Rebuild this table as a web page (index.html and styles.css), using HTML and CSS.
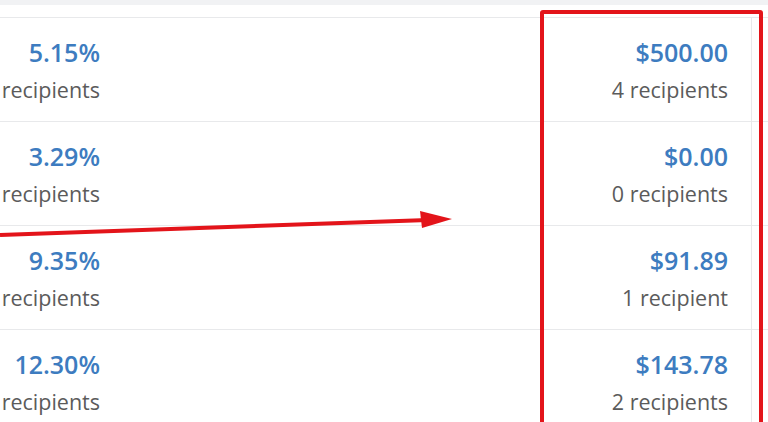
FILE: index.html
```html
<!DOCTYPE html>
<html lang="en">
<head>
    <meta charset="UTF-8">
    <title>Campaign recipients</title>
    <link rel="stylesheet" href="styles.css">
</head>
<body>
<div class="page">
    <div class="top-strip"></div>
    <div class="table">
        <div class="table-head"></div>
        <div class="row">
            <div class="cell cell-rate">
                <div class="value">5.15%</div>
                <div class="sub">21 recipients</div>
            </div>
            <div class="cell cell-gap"></div>
            <div class="cell cell-amount">
                <div class="value">$500.00</div>
                <div class="sub">4 recipients</div>
            </div>
        </div>
        <div class="row">
            <div class="cell cell-rate">
                <div class="value">3.29%</div>
                <div class="sub">14 recipients</div>
            </div>
            <div class="cell cell-gap"></div>
            <div class="cell cell-amount">
                <div class="value">$0.00</div>
                <div class="sub">0 recipients</div>
            </div>
        </div>
        <div class="row">
            <div class="cell cell-rate">
                <div class="value">9.35%</div>
                <div class="sub">38 recipients</div>
            </div>
            <div class="cell cell-gap"></div>
            <div class="cell cell-amount">
                <div class="value">$91.89</div>
                <div class="sub">1 recipient</div>
            </div>
        </div>
        <div class="row">
            <div class="cell cell-rate">
                <div class="value">12.30%</div>
                <div class="sub">50 recipients</div>
            </div>
            <div class="cell cell-gap"></div>
            <div class="cell cell-amount">
                <div class="value">$143.78</div>
                <div class="sub">2 recipients</div>
            </div>
        </div>
    </div>

    <div class="highlight-box"></div>
    <svg class="arrow" width="460" height="30" viewBox="0 0 460 30">
        <line x1="0" y1="26" x2="428" y2="11" stroke="#e3141a" stroke-width="4"/>
        <polygon points="420,2 452,10 422,19" fill="#e3141a"/>
    </svg>
</div>
</body>
</html>
```

FILE: styles.css
```css
:root {
    --link-color: #3d7cc0;
    --muted-color: #5b5b5b;
    --line-color: #e8e9eb;
    --mark-color: #e3141a;
}

html, body {
    margin: 0;
    overflow: hidden;
}

body {
    background-color: #fff;
    font-family: 'Open Sans', 'Noto Sans', sans-serif;
}

.page {
    position: relative;
    height: 422px;
    overflow: hidden;
}

.top-strip {
    height: 5px;
    background-color: #f1f2f4;
}

.table-head {
    height: 12px;
    border-bottom: 1px solid var(--line-color);
}

.row {
    display: grid;
    grid-template-columns: 124px 1fr 208px 16px;
    border-bottom: 1px solid var(--line-color);
    height: 104px;
    box-sizing: border-box;
}

.row::after {
    content: "";
}

.cell {
    padding-top: 18px;
    text-align: right;
    white-space: nowrap;
}

.cell-rate {
    padding-right: 24px;
    display: flex;
    flex-direction: column;
    align-items: flex-end;
    overflow: hidden;
}

.cell-amount {
    padding-right: 23px;
    border-right: 1px solid var(--line-color);
}

.value {
    color: var(--link-color);
    font-weight: 600;
    font-size: 25px;
    line-height: 32px;
}

.sub {
    color: var(--muted-color);
    font-size: 21.5px;
    line-height: 36px;
    margin-top: 4px;
}

.highlight-box {
    position: absolute;
    left: 540px;
    top: 10px;
    width: 215px;
    height: 440px;
    border: 4px solid var(--mark-color);
    border-radius: 3px;
}

.arrow {
    position: absolute;
    left: 0;
    top: 209px;
}
```
